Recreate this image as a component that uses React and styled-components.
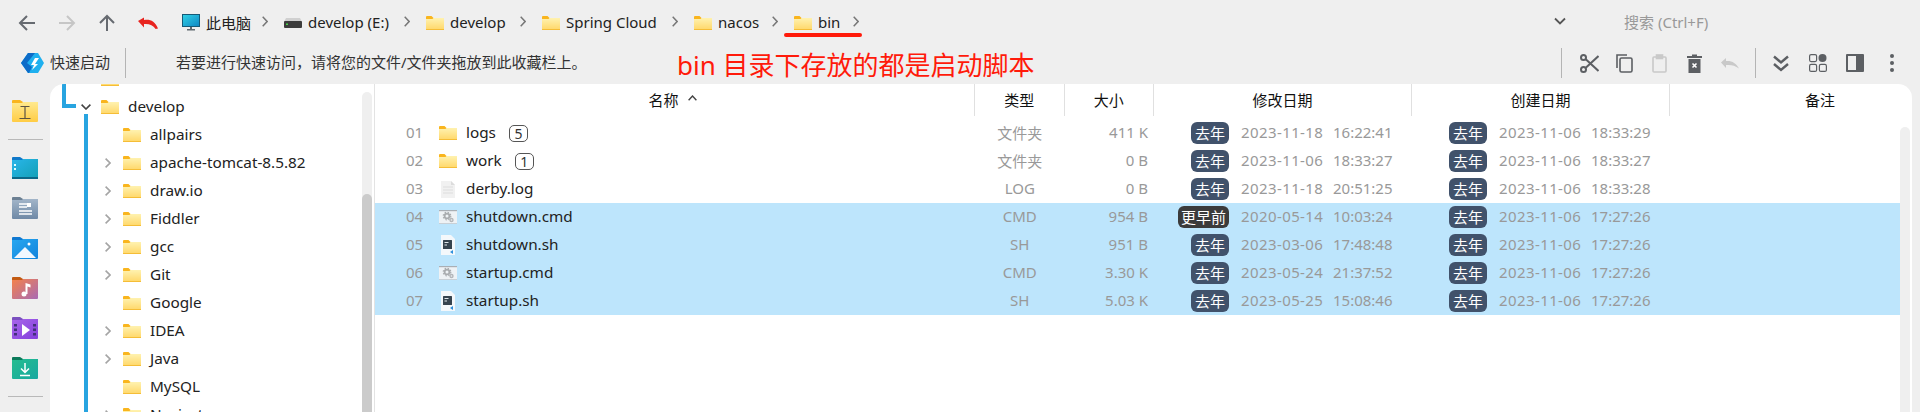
import React from 'react';
import styled, { createGlobalStyle } from 'styled-components';

const GlobalStyle = createGlobalStyle`
  html, body {
    margin: 0;
    padding: 0;
    height: 100%;
    overflow: hidden;
    background: #efefef;
    font-family: "Noto Sans", "Noto Sans CJK SC", sans-serif;
  }
`;

const Window = styled.div`
  display: flex;
  flex-direction: column;
  width: 1920px;
  height: 412px;
  overflow: hidden;
  background: #efefef;
`;

const TitleBar = styled.div`
  position: relative;
  display: flex;
  align-items: center;
  flex: none;
  height: 42px;
  padding: 3px 0 0 18px;
  box-sizing: border-box;
`;

const NavGroup = styled.div`
  display: flex;
  align-items: center;
  gap: 22px;
  margin-right: 24px;
`;

const Breadcrumb = styled.div`
  display: flex;
  align-items: center;
`;

const Crumb = styled.div`
  display: flex;
  align-items: center;
  gap: 6px;
  font-size: 15px;
  color: #222;
  white-space: nowrap;
`;

const CrumbLabel = styled.span`
  display: block;
  width: ${p => p.$w}px;
  margin-bottom: 1px;
`;

const CrumbArrow = styled.svg`
  flex: none;
  width: 6px;
  height: 11px;
  margin: 0 16px 3px 12px;
`;

const RedUnderline = styled.div`
  position: absolute;
  left: 784px;
  top: 33px;
  width: 78px;
  height: 4px;
  border-radius: 2px;
  background: #ff1a0a;
`;

const SearchArea = styled.div`
  display: flex;
  align-items: center;
  margin-left: auto;
  width: 366px;
  font-size: 15px;
  color: #999;
`;

const SearchText = styled.span`
  margin-bottom: 2px;
`;

const SearchCaret = styled.svg`
  width: 12px;
  height: 8px;
  margin: 0 58px 4px 0;
`;

const FavBar = styled.div`
  position: relative;
  display: flex;
  align-items: center;
  flex: none;
  height: 42px;
  padding-left: 21px;
  box-sizing: border-box;
`;

const FavLabel = styled.span`
  margin: 0 0 3px 6px;
  font-size: 15px;
  color: #333;
  white-space: nowrap;
`;

const BarSeparator = styled.div`
  flex: none;
  width: 1px;
  height: 30px;
  background: #b4b4b4;
  margin-left: ${p => p.$left || 0}px;
`;

const FavHint = styled.span`
  margin: 0 0 3px 50px;
  font-size: 15px;
  color: #333;
  white-space: nowrap;
`;

const Annotation = styled.div`
  position: absolute;
  left: 677px;
  top: 6px;
  font-size: 26px;
  line-height: 34px;
  color: #ff1a0a;
  white-space: nowrap;
`;

const Tools = styled.div`
  display: flex;
  align-items: center;
  margin-left: auto;
  padding-right: 10px;
`;

const ToolButton = styled.div`
  display: flex;
  align-items: center;
  justify-content: center;
  width: ${p => p.$w}px;
  margin-left: ${p => p.$left || 0}px;
  color: ${p => (p.$muted ? '#c9c9c9' : '#5c5f63')};
`;

const Main = styled.div`
  display: flex;
  flex: 1;
  min-height: 0;
  padding-right: 8px;
`;

const Rail = styled.div`
  display: flex;
  flex-direction: column;
  align-items: center;
  flex: none;
  width: 50px;
  padding-top: 16px;
  box-sizing: border-box;
  overflow: hidden;
`;

const RailItem = styled.div`
  flex: none;
  height: 22px;
  margin-bottom: 18px;
`;

const RailRule = styled.div`
  flex: none;
  width: 35px;
  height: 1px;
  background: #b9b9b9;
  margin: -1px 0 17px;
`;

const Panel = styled.div`
  display: flex;
  flex: 1;
  min-width: 0;
  background: #fff;
  border-radius: 14px 14px 0 0;
  overflow: hidden;
`;

const TreePane = styled.div`
  position: relative;
  display: flex;
  flex: none;
  width: 325px;
  box-sizing: border-box;
  border-right: 1px solid #e3e3e3;
  overflow: hidden;
`;

const TreeRows = styled.div`
  flex: 1;
  min-width: 0;
  margin-top: -19px;
`;

const TreeRow = styled.div`
  display: flex;
  align-items: center;
  height: 28px;
  padding-left: ${p => p.$indent}px;
  font-size: 15.3px;
  color: #222;
  white-space: nowrap;
`;

const TreeToggle = styled.svg`
  flex: none;
  width: ${p => (p.$open ? 10 : 6)}px;
  height: ${p => (p.$open ? 6 : 10)}px;
  margin-right: ${p => (p.$open ? 10 : 12)}px;
  color: ${p => (p.$open ? '#444' : '#a5a5a5')};
`;

const TreeName = styled.span`
  margin: 0 0 2px 9px;
`;

const TreeLine = styled.div`
  position: absolute;
  background: #28a4e0;
`;

const ParentLine = styled(TreeLine)`
  left: 12px;
  top: 0;
  width: 14px;
  height: 24px;
  background: none;
  border-left: 4px solid #28a4e0;
  border-bottom: 4px solid #28a4e0;
  box-sizing: border-box;
`;

const ChildLine = styled(TreeLine)`
  left: 34px;
  top: 30px;
  bottom: 0;
  width: 4px;
`;

const TreeScrollTrack = styled.div`
  flex: none;
  width: 10px;
  margin: 8px 2px 0 0;
  border-radius: 5px 5px 0 0;
  background: #efefef;
`;

const TreeScrollThumb = styled.div`
  margin-top: 102px;
  height: 300px;
  border-radius: 5px 5px 0 0;
  background: #cbcbcb;
`;

const FilePane = styled.div`
  display: flex;
  flex-direction: column;
  flex: 1;
  min-width: 0;
`;

const columns = '600px 89.5px 89.5px 258px 258px 1fr';

const HeaderRow = styled.div`
  display: grid;
  grid-template-columns: ${columns};
  flex: none;
  height: 32px;
`;

const HeaderCell = styled.div`
  display: flex;
  align-items: center;
  justify-content: center;
  gap: 9px;
  padding: 0 ${p => p.$shiftRight || 0}px 2px ${p => p.$shiftLeft || 0}px;
  font-size: 15px;
  color: #111;
  white-space: nowrap;
  ${p => (p.$last ? '' : 'border-right: 1px solid #e0e0e0;')}
`;

const SortCaret = styled.svg`
  width: 9px;
  height: 6px;
  margin-bottom: 2px;
`;

const FileBody = styled.div`
  display: flex;
  flex: 1;
  min-height: 0;
`;

const FileRows = styled.div`
  flex: 1;
  min-width: 0;
  padding-top: 3px;
`;

const FileRow = styled.div`
  display: grid;
  grid-template-columns: ${columns};
  align-items: center;
  height: 28px;
  background: ${p => (p.$selected ? '#bde5fc' : 'transparent')};
`;

const NameCell = styled.div`
  display: flex;
  align-items: center;
  padding-left: 31px;
  font-size: 15.3px;
  color: #222;
`;

const FileName = styled.span`
  margin-bottom: 2px;
`;

const RowNumber = styled.span`
  flex: none;
  width: 33px;
  margin-bottom: 2px;
  font-size: 15px;
  color: #999;
`;

const IconSlot = styled.span`
  display: flex;
  align-items: center;
  justify-content: center;
  flex: none;
  width: 18px;
  margin-right: 9px;
`;

const CountTag = styled.span`
  display: flex;
  align-items: center;
  justify-content: center;
  width: 19px;
  height: 17px;
  margin-left: 13px;
  box-sizing: border-box;
  border: 1px solid #555;
  border-radius: 5px;
  font-size: 14px;
  color: #333;
`;

const TypeCell = styled.div`
  padding-bottom: 2px;
  text-align: center;
  font-size: 15px;
  color: #999;
`;

const SizeCell = styled.div`
  padding: 0 6px 2px 0;
  text-align: right;
  font-size: 15px;
  color: #999;
`;

const DateCell = styled.div`
  display: flex;
  align-items: center;
  font-size: 15px;
  color: #999;
  white-space: nowrap;
`;

const BadgeSlot = styled.div`
  display: flex;
  justify-content: flex-end;
  flex: none;
  width: 75px;
  margin-right: 12px;
`;

const AgeBadge = styled.span`
  display: flex;
  align-items: center;
  justify-content: center;
  height: 22px;
  width: ${p => (p.$old ? 51 : 38)}px;
  padding-bottom: 1px;
  box-sizing: border-box;
  border-radius: 6px;
  background: ${p => (p.$old ? '#3b3b3b' : '#41526b')};
  color: #fff;
  font-size: 15px;
`;

const DatePart = styled.span`
  flex: none;
  width: 92px;
  margin-bottom: 2px;
  letter-spacing: 0.4px;
`;

const TimePart = styled.span`
  margin-bottom: 2px;
`;

const ListScrollTrack = styled.div`
  flex: none;
  width: 10px;
  margin: 11px 2px 0 0;
  border-radius: 5px 5px 0 0;
  background: #efefef;
`;

const HiddenDefs = styled.svg`
  position: absolute;
  width: 0;
  height: 0;
`;

/* ---------- drawn icons ---------- */

const Arrow = ({ dir, color }) => {
  const paths = {
    left: 'M17 9H2M9 2L2 9l7 7',
    right: 'M1 9h15M9 2l7 7-7 7',
    up: 'M9 17V2M2 9l7-7 7 7',
  };
  return (
    <svg width="18" height="18" viewBox="0 0 18 18" fill="none" stroke={color} strokeWidth="2">
      <path d={paths[dir]} />
    </svg>
  );
};

const RedUndo = () => (
  <svg width="20" height="12" viewBox="0 0 20 12">
    <path d="M0 4l6-3.5V3c6-1 11 1 14 8.500l-2.400.5C15 8 11 6.500 6 7v3.500z" fill="#e8241f" />
  </svg>
);

const Chevron = () => (
  <CrumbArrow viewBox="0 0 6 11" fill="none" stroke="#777" strokeWidth="1.5">
    <path d="M.7.8l4.400 4.700L.7 10.200" />
  </CrumbArrow>
);

const FolderGradients = () => (
  <HiddenDefs>
    <defs>
      <linearGradient id="folderBody" x1="0" y1="0" x2="0" y2="1">
        <stop offset="0" stopColor="#fff2b0" />
        <stop offset="1" stopColor="#ffd768" />
      </linearGradient>
      <linearGradient id="screen" x1="0" y1="0" x2="1" y2="1">
        <stop offset="0" stopColor="#32d3e6" />
        <stop offset="1" stopColor="#0d86c4" />
      </linearGradient>
      <linearGradient id="railYellow" x1="0" y1="0" x2="0" y2="1">
        <stop offset="0" stopColor="#ffe98f" />
        <stop offset="1" stopColor="#ffcc44" />
      </linearGradient>
      <linearGradient id="railTeal" x1="0" y1="0" x2="1" y2="1">
        <stop offset="0" stopColor="#29b6ea" />
        <stop offset="1" stopColor="#139fb5" />
      </linearGradient>
      <linearGradient id="railGrey" x1="0" y1="0" x2="0" y2="1">
        <stop offset="0" stopColor="#a2b5c9" />
        <stop offset="1" stopColor="#6f89a6" />
      </linearGradient>
      <linearGradient id="railBlue" x1="0" y1="0" x2="1" y2="1">
        <stop offset="0" stopColor="#27a8f0" />
        <stop offset="1" stopColor="#1283dc" />
      </linearGradient>
      <linearGradient id="railMusic" x1="0" y1="0" x2="1" y2="1">
        <stop offset="0" stopColor="#f5834a" />
        <stop offset="1" stopColor="#a86ab4" />
      </linearGradient>
      <linearGradient id="railVideo" x1="0" y1="0" x2="1" y2="1">
        <stop offset="0" stopColor="#a866ea" />
        <stop offset="1" stopColor="#833fdc" />
      </linearGradient>
      <linearGradient id="railGreen" x1="0" y1="0" x2="1" y2="1">
        <stop offset="0" stopColor="#25bd8f" />
        <stop offset="1" stopColor="#18a8a0" />
      </linearGradient>
    </defs>
  </HiddenDefs>
);

const Folder = () => (
  <svg width="18" height="14" viewBox="0 0 18 14">
    <path d="M0 1a1 1 0 011-1h4.500l2 2H17a1 1 0 011 1v2H0z" fill="#f9b51e" />
    <path d="M0 3h6.500l1-1H18v11a1 1 0 01-1 1H1a1 1 0 01-1-1z" fill="url(#folderBody)" />
    <rect y="13" width="18" height="1" fill="#f5bd37" />
  </svg>
);

const Monitor = () => (
  <svg width="18" height="17" viewBox="0 0 18 17">
    <rect x=".5" y=".5" width="17" height="12" fill="url(#screen)" stroke="#155a78" />
    <rect x="8" y="13" width="2" height="2" fill="#606a70" />
    <rect x="5" y="15" width="8" height="1.500" fill="#606a70" />
  </svg>
);

const Drive = () => (
  <svg width="18" height="10" viewBox="0 0 18 10">
    <path d="M2 0h14l2 4H0z" fill="#d0d0d0" />
    <rect y="3" width="18" height="7" rx="1" fill="#3c3c3c" />
    <rect x="2" y="5.500" width="2" height="1.500" fill="#49d04c" />
  </svg>
);

const QuickLogo = () => (
  <svg width="23" height="22" viewBox="0 0 23 22">
    <path d="M7 1h10l6 10-6 10H7L0 11z" fill="#1fb0ef" />
    <path d="M7 1h7L6 11l5 4-3 6H7L0 11z" fill="#0d6cc8" />
    <path d="M14 6h4l-4 6h3l-6 6 2-5h-3z" fill="#fff" />
  </svg>
);

const RailFolder = ({ tab, body, children }) => (
  <svg width="26" height="22" viewBox="0 0 26 22">
    <path d="M0 1a1 1 0 011-1h7l3 2h14a1 1 0 011 1v3H0z" fill={tab} />
    <path d="M0 3h10l1-1h15v19a1 1 0 01-1 1H1a1 1 0 01-1-1z" fill={body} />
    {children}
  </svg>
);

const railIcons = [
  <RailFolder key="tool" tab="#f9b51e" body="url(#railYellow)">
    <path d="M13 7v11M8.500 6.500h9M7.500 18.500h11" stroke="#5b5343" strokeWidth="1.200" fill="none" />
  </RailFolder>,
  <RailFolder key="desk" tab="#0f78c9" body="url(#railTeal)">
    <rect x="2" y="7" width="2" height="2" fill="#dff" />
    <rect x="2" y="11" width="2" height="2" fill="#dff" />
    <rect y="20" width="26" height="2" fill="#0b6787" />
  </RailFolder>,
  <RailFolder key="doc" tab="#6c8093" body="url(#railGrey)">
    <path d="M7 7h8M7 10h8M7 14h13M7 17h13" stroke="#fff" strokeWidth="1.400" />
    <rect x="15" y="6" width="4" height="4" fill="#fff" />
  </RailFolder>,
  <RailFolder key="pic" tab="#0f78d1" body="url(#railBlue)">
    <path d="M2 21L13 10l11 11z" fill="#f2f8ff" />
    <circle cx="17" cy="7" r="1.500" fill="#fff" />
  </RailFolder>,
  <RailFolder key="music" tab="#c25a12" body="url(#railMusic)">
    <path d="M13.500 17V6l5 1.500v3l-3-1V17z" fill="#fff" />
    <circle cx="12" cy="17" r="2.500" fill="#fff" />
  </RailFolder>,
  <RailFolder key="video" tab="#7a4fbf" body="url(#railVideo)">
    <path d="M10 7l8 6-8 6z" fill="#fff" />
    <path d="M2 7h3v2.500H2zM2 11.500h3V14H2zM2 16h3v2.500H2zM21 7h3v2.500h-3zM21 11.500h3V14h-3zM21 16h3v2.500h-3z" fill="#41307a" />
  </RailFolder>,
  <RailFolder key="down" tab="#0b7a5a" body="url(#railGreen)">
    <path d="M13 6v9M9 11.500l4 4 4-4M8 18.500h10" stroke="#fff" strokeWidth="1.500" fill="none" />
  </RailFolder>,
];

const WinMark = () => (
  <svg width="26" height="22" viewBox="0 0 26 22">
    <path d="M-2 0h5v5h-5zM4 0h5v5H4z" fill="#1f9ee8" />
  </svg>
);

const DocIcon = () => (
  <svg width="14" height="17" viewBox="0 0 14 17">
    <path d="M0 0h10l4 4v13H0z" fill="#f1f1f1" />
    <path d="M10 0l4 4h-4z" fill="#dcdcdc" />
    <path d="M2 6h10M2 9h10M2 12h10" stroke="#e3e3e3" strokeWidth="1.500" />
  </svg>
);

const CmdIcon = () => (
  <svg width="18" height="14" viewBox="0 0 18 14">
    <rect width="18" height="14" fill="#eef2f5" />
    <rect width="18" height="1.200" fill="#a9afb5" />
    <rect y="13" width="18" height="1" fill="#c9d0d6" />
    <circle cx="8" cy="6" r="2.400" fill="none" stroke="#a9acaf" strokeWidth="1.800" />
    <circle cx="8" cy="6" r="3.800" fill="none" stroke="#a9acaf" strokeWidth="1.200" strokeDasharray="1.500 1.500" />
    <circle cx="12.500" cy="10" r="1.500" fill="none" stroke="#b4b7ba" strokeWidth="1.400" />
  </svg>
);

const ShIcon = () => (
  <svg width="14" height="20" viewBox="0 0 14 20">
    <path d="M0 0h10l4 4v16H0z" fill="#f4f8fb" />
    <rect x="2" y="5" width="9" height="9" rx=".5" fill="#36444f" />
    <path d="M3.500 7.500h4M3.500 10h2.500" stroke="#dfe6ea" strokeWidth="1" />
    <path d="M9 17l3-2v4z" fill="#2e8fdc" />
  </svg>
);

const fileIcons = {
  folder: <Folder />,
  doc: <DocIcon />,
  cmd: <CmdIcon />,
  sh: <ShIcon />,
};

const Scissors = () => (
  <svg width="19" height="19" viewBox="0 0 19 19" fill="none" stroke="currentColor" strokeWidth="2">
    <circle cx="3.500" cy="3.500" r="2.500" />
    <circle cx="3.500" cy="15.500" r="2.500" />
    <path d="M5.500 5l13 12M5.500 14L18.500 2" />
  </svg>
);

const CopyIcon = () => (
  <svg width="17" height="19" viewBox="0 0 17 19" fill="none" stroke="currentColor" strokeWidth="1.600">
    <path d="M1 14V1h10" />
    <rect x="4" y="4" width="12" height="14" rx="1.500" />
  </svg>
);

const PasteIcon = () => (
  <svg width="15" height="19" viewBox="0 0 15 19" fill="none" stroke="currentColor" strokeWidth="1.600">
    <rect x="1" y="3" width="13" height="15" rx="1" />
    <rect x="4.500" y="1" width="6" height="3.500" fill="currentColor" />
  </svg>
);

const TrashIcon = () => (
  <svg width="15" height="19" viewBox="0 0 15 19">
    <path d="M0 2h5V.5h5V2h5v2H0zM1.500 5h12v14h-12z" fill="currentColor" />
    <path d="M5.500 9.500l4 4M9.500 9.500l-4 4" stroke="#fff" strokeWidth="1.600" />
  </svg>
);

const GreyUndo = () => (
  <svg width="18" height="12" viewBox="0 0 18 12">
    <path d="M0 5.500L5 1v3c6-.5 10 2 13 7.500C14 8.500 10 7.500 5 8v3z" fill="currentColor" />
  </svg>
);

const DoubleDown = () => (
  <svg width="16" height="17" viewBox="0 0 16 17" fill="none" stroke="currentColor" strokeWidth="2.400">
    <path d="M1 1.500l7 6 7-6M1 9l7 6 7-6" />
  </svg>
);

const GridIcon = () => (
  <svg width="18" height="18" viewBox="0 0 18 18" fill="none" stroke="currentColor" strokeWidth="1.200">
    <rect x=".6" y=".6" width="7" height="7" rx="1.500" />
    <circle cx="13.500" cy="4" r="4" fill="currentColor" stroke="none" />
    <rect x=".6" y="10.400" width="7" height="7" rx="1.500" />
    <rect x="10.400" y="10.400" width="7" height="7" rx="1.500" />
  </svg>
);

const PanelIcon = () => (
  <svg width="18" height="18" viewBox="0 0 18 18">
    <rect width="18" height="18" rx="1" fill="currentColor" />
    <rect x="2" y="2" width="8" height="14" fill="#efefef" />
  </svg>
);

const DotsIcon = () => (
  <svg width="4" height="18" viewBox="0 0 4 18" fill="currentColor">
    <circle cx="2" cy="2" r="2" />
    <circle cx="2" cy="9" r="2" />
    <circle cx="2" cy="16" r="2" />
  </svg>
);

/* ---------- data ---------- */

const crumbs = [
  { icon: <Monitor />, label: '此电脑', w: 44 },
  { icon: <Drive />, label: 'develop (E:)', w: 84 },
  { icon: <Folder />, label: 'develop', w: 58 },
  { icon: <Folder />, label: 'Spring Cloud', w: 94 },
  { icon: <Folder />, label: 'nacos', w: 42 },
  { icon: <Folder />, label: 'bin', w: 23 },
];

const treeItems = [
  { name: 'allpairs', toggle: false },
  { name: 'apache-tomcat-8.5.82', toggle: true },
  { name: 'draw.io', toggle: true },
  { name: 'Fiddler', toggle: true },
  { name: 'gcc', toggle: true },
  { name: 'Git', toggle: true },
  { name: 'Google', toggle: false },
  { name: 'IDEA', toggle: true },
  { name: 'Java', toggle: true },
  { name: 'MySQL', toggle: false },
  { name: 'Navicat', toggle: true },
];

const files = [
  { no: '01', icon: 'folder', name: 'logs', count: 5, type: '文件夹', size: '411 K', mod: ['2023-11-18', '16:22:41'], made: '18:33:29' },
  { no: '02', icon: 'folder', name: 'work', count: 1, type: '文件夹', size: '0 B', mod: ['2023-11-06', '18:33:27'], made: '18:33:27' },
  { no: '03', icon: 'doc', name: 'derby.log', type: 'LOG', size: '0 B', mod: ['2023-11-18', '20:51:25'], made: '18:33:28' },
  { no: '04', icon: 'cmd', name: 'shutdown.cmd', type: 'CMD', size: '954 B', mod: ['2020-05-14', '10:03:24'], made: '17:27:26', old: true, selected: true },
  { no: '05', icon: 'sh', name: 'shutdown.sh', type: 'SH', size: '951 B', mod: ['2023-03-06', '17:48:48'], made: '17:27:26', selected: true },
  { no: '06', icon: 'cmd', name: 'startup.cmd', type: 'CMD', size: '3.30 K', mod: ['2023-05-24', '21:37:52'], made: '17:27:26', selected: true },
  { no: '07', icon: 'sh', name: 'startup.sh', type: 'SH', size: '5.03 K', mod: ['2023-05-25', '15:08:46'], made: '17:27:26', selected: true },
];

const DateColumn = ({ old, date, time }) => (
  <DateCell>
    <BadgeSlot>
      <AgeBadge $old={old}>{old ? '更早前' : '去年'}</AgeBadge>
    </BadgeSlot>
    <DatePart>{date}</DatePart>
    <TimePart>{time}</TimePart>
  </DateCell>
);

export default function App() {
  return (
    <Window>
      <GlobalStyle />
      <FolderGradients />

      <TitleBar>
        <NavGroup>
          <Arrow dir="left" color="#666a70" />
          <Arrow dir="right" color="#c6c6c6" />
          <Arrow dir="up" color="#666a70" />
          <RedUndo />
        </NavGroup>
        <Breadcrumb>
          {crumbs.map(c => (
            <React.Fragment key={c.label}>
              <Crumb>
                {c.icon}
                <CrumbLabel $w={c.w}>{c.label}</CrumbLabel>
              </Crumb>
              <Chevron />
            </React.Fragment>
          ))}
        </Breadcrumb>
        <SearchArea>
          <SearchCaret viewBox="0 0 12 8" fill="none" stroke="#555" strokeWidth="1.800">
            <path d="M1 1.500l5 5 5-5" />
          </SearchCaret>
          <SearchText>搜索 (Ctrl+F)</SearchText>
        </SearchArea>
        <RedUnderline />
      </TitleBar>

      <FavBar>
        <QuickLogo />
        <FavLabel>快速启动</FavLabel>
        <BarSeparator $left={15} />
        <FavHint>若要进行快速访问，请将您的文件/文件夹拖放到此收藏栏上。</FavHint>
        <Annotation>bin 目录下存放的都是启动脚本</Annotation>
        <Tools>
          <BarSeparator />
          <ToolButton $w={35} $left={10}><Scissors /></ToolButton>
          <ToolButton $w={35}><CopyIcon /></ToolButton>
          <ToolButton $w={35} $muted><PasteIcon /></ToolButton>
          <ToolButton $w={35}><TrashIcon /></ToolButton>
          <ToolButton $w={35} $muted><GreyUndo /></ToolButton>
          <BarSeparator $left={8} />
          <ToolButton $w={37} $left={6}><DoubleDown /></ToolButton>
          <ToolButton $w={37}><GridIcon /></ToolButton>
          <ToolButton $w={37}><PanelIcon /></ToolButton>
          <ToolButton $w={37}><DotsIcon /></ToolButton>
        </Tools>
      </FavBar>

      <Main>
        <Rail>
          {railIcons.slice(0, 1).map(icon => <RailItem key={icon.key}>{icon}</RailItem>)}
          <RailRule />
          {railIcons.slice(1).map(icon => <RailItem key={icon.key}>{icon}</RailItem>)}
          <RailRule />
          <RailItem><WinMark /></RailItem>
        </Rail>

        <Panel>
          <TreePane>
            <TreeRows>
              <TreeRow $indent={51}><Folder /></TreeRow>
              <TreeRow $indent={31}>
                <TreeToggle $open viewBox="0 0 10 6" fill="none" stroke="currentColor" strokeWidth="1.600">
                  <path d="M.6.6L5 5 9.400.6" />
                </TreeToggle>
                <Folder />
                <TreeName>develop</TreeName>
              </TreeRow>
              {treeItems.map(item => (
                <TreeRow key={item.name} $indent={item.toggle ? 55 : 73}>
                  {item.toggle && (
                    <TreeToggle viewBox="0 0 6 10" fill="none" stroke="currentColor" strokeWidth="1.600">
                      <path d="M.6.6L5 5 .6 9.400" />
                    </TreeToggle>
                  )}
                  <Folder />
                  <TreeName>{item.name}</TreeName>
                </TreeRow>
              ))}
            </TreeRows>
            <TreeScrollTrack>
              <TreeScrollThumb />
            </TreeScrollTrack>
            <ParentLine />
            <ChildLine />
          </TreePane>

          <FilePane>
            <HeaderRow>
              <HeaderCell $shiftRight={4}>
                名称
                <SortCaret viewBox="0 0 9 6" fill="none" stroke="#444" strokeWidth="1.400">
                  <path d="M.6 5.200L4.500 1l3.900 4.200" />
                </SortCaret>
              </HeaderCell>
              <HeaderCell>类型</HeaderCell>
              <HeaderCell>大小</HeaderCell>
              <HeaderCell>修改日期</HeaderCell>
              <HeaderCell>创建日期</HeaderCell>
              <HeaderCell $last $shiftLeft={58}>备注</HeaderCell>
            </HeaderRow>
            <FileBody>
              <FileRows>
                {files.map(f => (
                  <FileRow key={f.no} $selected={f.selected}>
                    <NameCell>
                      <RowNumber>{f.no}</RowNumber>
                      <IconSlot>{fileIcons[f.icon]}</IconSlot>
                      <FileName>{f.name}</FileName>
                      {f.count && <CountTag>{f.count}</CountTag>}
                    </NameCell>
                    <TypeCell>{f.type}</TypeCell>
                    <SizeCell>{f.size}</SizeCell>
                    <DateColumn old={f.old} date={f.mod[0]} time={f.mod[1]} />
                    <DateColumn date="2023-11-06" time={f.made} />
                    <span />
                  </FileRow>
                ))}
              </FileRows>
              <ListScrollTrack />
            </FileBody>
          </FilePane>
        </Panel>
      </Main>
    </Window>
  );
}
